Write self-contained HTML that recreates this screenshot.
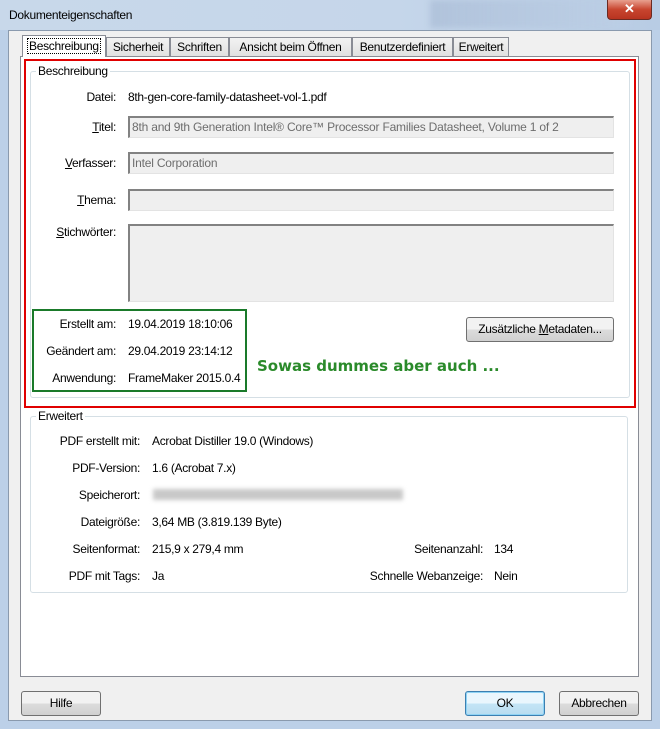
<!DOCTYPE html>
<html><head><meta charset="utf-8"><style>
*{margin:0;padding:0;box-sizing:border-box}
body{width:660px;height:729px;overflow:hidden;background:#bcd0e8;font-family:"Liberation Sans",sans-serif;font-size:12px;color:#000;position:relative}
.a{position:absolute}
.t{position:absolute;white-space:nowrap;line-height:14px;letter-spacing:-0.3px}
.r{text-align:right}
.inp{position:absolute;background:#efefef;border-top:2px solid #828282;border-left:2px solid #828282;border-bottom:1px solid #e3e3e3;border-right:1px solid #e3e3e3;color:#6d6d6d;padding:2px 2px;line-height:14px;white-space:nowrap;overflow:hidden;letter-spacing:-0.2px}
.tab{position:absolute;top:37px;height:20px;border:1px solid #898c95;border-bottom:none;background:linear-gradient(#f2f2f2,#e0e0e0);text-align:center;line-height:18px;letter-spacing:-0.3px}
.btn{position:absolute;height:25px;border:1px solid #707070;border-radius:3px;background:linear-gradient(#f2f2f2 50%,#dcdcdc 50%,#d0d0d0);text-align:center;line-height:22px;letter-spacing:-0.3px}
.grp{position:absolute;border:1px solid #d5dfe5;border-radius:3px}
.gl{position:absolute;background:#fff;padding:0 2px;line-height:14px;letter-spacing:-0.3px}
</style></head><body>
<div class="a" style="left:0;top:0;width:660px;height:30px;background:linear-gradient(90deg,#c8d8ea 0%,#c5d6ea 60%,#b8cce4 100%)"></div>
<div class="a" style="left:430px;top:0;width:200px;height:28px;background:linear-gradient(90deg,rgba(150,170,200,.4),rgba(200,215,235,.2));filter:blur(3px)"></div>
<div class="t" style="left:9px;top:8px;font-size:12px">Dokumenteigenschaften</div>
<div class="a" style="left:607px;top:0;width:45px;height:20px;border:1px solid #6b2a22;border-top:none;border-radius:0 0 4px 4px;background:linear-gradient(#e8a08f,#c8452f 50%,#b83320);color:#fff;font-weight:bold;text-align:center;line-height:18px;font-size:13px">✕</div>
<div class="a" style="left:8px;top:30px;width:644px;height:691px;background:#f0f0f0;border:1px solid #8a9aae"></div>
<div class="tab" style="left:106px;width:64px">Sicherheit</div>
<div class="tab" style="left:170px;width:59px">Schriften</div>
<div class="tab" style="left:229px;width:123px">Ansicht beim Öffnen</div>
<div class="tab" style="left:352px;width:101px">Benutzerdefiniert</div>
<div class="tab" style="left:453px;width:56px">Erweitert</div>
<div class="a" style="left:20px;top:56px;width:619px;height:621px;background:#fff;border:1px solid #898c95"></div>
<div class="a" style="left:22px;top:35px;width:84px;height:22px;background:#fff;border:1px solid #898c95;border-bottom:none"></div>
<div class="t" style="left:28px;top:39px;outline:1px dotted #000;padding:0 1px">Beschreibung</div>
<div class="a" style="left:24px;top:59px;width:612px;height:349px;border:2px solid #e00000"></div>
<div class="grp" style="left:30px;top:71px;width:600px;height:327px"></div>
<div class="gl" style="left:36px;top:64px">Beschreibung</div>
<div class="t r" style="left:40px;width:76px;top:90px">Datei:</div>
<div class="t" style="left:128px;top:90px">8th-gen-core-family-datasheet-vol-1.pdf</div>
<div class="t r" style="left:40px;width:76px;top:120px"><u>T</u>itel:</div>
<div class="inp" style="left:128px;top:116px;width:486px;height:22px">8th and 9th Generation Intel® Core™ Processor Families Datasheet, Volume 1 of 2</div>
<div class="t r" style="left:40px;width:76px;top:156px"><u>V</u>erfasser:</div>
<div class="inp" style="left:128px;top:152px;width:486px;height:22px">Intel Corporation</div>
<div class="t r" style="left:40px;width:76px;top:193px"><u>T</u>hema:</div>
<div class="inp" style="left:128px;top:189px;width:486px;height:22px"></div>
<div class="t r" style="left:30px;width:86px;top:225px"><u>S</u>tichwörter:</div>
<div class="inp" style="left:128px;top:224px;width:486px;height:78px"></div>
<div class="a" style="left:32px;top:309px;width:215px;height:83px;border:2px solid #1a7a2a"></div>
<div class="t r" style="left:36px;width:80px;top:317px">Erstellt am:</div>
<div class="t" style="left:128px;top:317px">19.04.2019 18:10:06</div>
<div class="t r" style="left:36px;width:80px;top:344px">Geändert am:</div>
<div class="t" style="left:128px;top:344px">29.04.2019 23:14:12</div>
<div class="t r" style="left:36px;width:80px;top:371px">Anwendung:</div>
<div class="t" style="left:128px;top:371px">FrameMaker 2015.0.4</div>
<div class="t" style="left:257px;top:357px;color:#2a8a2a;font-size:15px;line-height:18px;font-weight:bold;letter-spacing:0px;font-family:'DejaVu Sans',sans-serif">Sowas dummes aber auch ...</div>
<div class="btn" style="left:466px;top:317px;width:148px">Zusätzliche <u>M</u>etadaten...</div>
<div class="grp" style="left:30px;top:416px;width:598px;height:177px"></div>
<div class="gl" style="left:36px;top:409px">Erweitert</div>
<div class="t r" style="left:30px;width:110px;top:434px">PDF erstellt mit:</div>
<div class="t" style="left:152px;top:434px">Acrobat Distiller 19.0 (Windows)</div>
<div class="t r" style="left:30px;width:110px;top:461px">PDF-Version:</div>
<div class="t" style="left:152px;top:461px">1.6 (Acrobat 7.x)</div>
<div class="t r" style="left:30px;width:110px;top:488px">Speicherort:</div>
<div class="a" style="left:153px;top:489px;width:250px;height:11px;background:#c8c8c8;filter:blur(2px)"></div>
<div class="t r" style="left:30px;width:110px;top:515px">Dateigröße:</div>
<div class="t" style="left:152px;top:515px">3,64 MB (3.819.139 Byte)</div>
<div class="t r" style="left:30px;width:110px;top:542px">Seitenformat:</div>
<div class="t" style="left:152px;top:542px">215,9 x 279,4 mm</div>
<div class="t r" style="left:330px;width:153px;top:542px">Seitenanzahl:</div>
<div class="t" style="left:494px;top:542px">134</div>
<div class="t r" style="left:30px;width:110px;top:569px">PDF mit Tags:</div>
<div class="t" style="left:152px;top:569px">Ja</div>
<div class="t r" style="left:330px;width:153px;top:569px">Schnelle Webanzeige:</div>
<div class="t" style="left:494px;top:569px">Nein</div>
<div class="btn" style="left:21px;top:691px;width:80px">Hilfe</div>
<div class="btn" style="left:465px;top:691px;width:80px;border-color:#3c7fb1;background:linear-gradient(#eaf6fd 50%,#c4e5f6 50%,#b8dcf0);box-shadow:inset 0 0 0 1px #8fd3f4">OK</div>
<div class="btn" style="left:559px;top:691px;width:80px">Abbrechen</div>
</body></html>
